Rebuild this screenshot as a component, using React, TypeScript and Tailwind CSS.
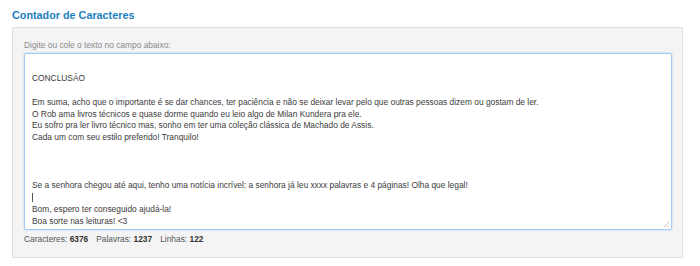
const lines: string[] = [
  "",
  "CONCLUSÃO",
  "",
  "Em suma, acho que o importante é se dar chances, ter paciência e não se deixar levar pelo que outras pessoas dizem ou gostam de ler.",
  "O Rob ama livros técnicos e quase dorme quando eu leio algo de Milan Kundera pra ele.",
  "Eu sofro pra ler livro técnico mas, sonho em ter uma coleção clássica de Machado de Assis.",
  "Cada um com seu estilo preferido! Tranquilo!",
  "",
  "",
  "",
  "Se a senhora chegou até aqui, tenho uma notícia incrível: a senhora já leu xxxx palavras e 4 páginas! Olha que legal!",
  "|",
  "Bom, espero ter conseguido ajudá-la!",
  "Boa sorte nas leituras! <3",
];

function ResizeGrip() {
  return (
    <svg
      width="7"
      height="7"
      viewBox="0 0 7 7"
      className="absolute bottom-[1px] right-[1px]"
    >
      <path d="M1 6 L6 1 M4 6 L6 4" stroke="#b5b5b5" strokeWidth="0.8" />
    </svg>
  );
}

export default function App() {
  return (
    <div
      className="h-[266px] w-[700px] bg-white px-3 pt-[8px]"
      style={{ fontFamily: '"Liberation Sans", Arial, sans-serif' }}
    >
      <h1 className="text-[10.8px] font-bold leading-[14px] text-[#1c7fbf]">
        Contador de Caracteres
      </h1>

      <div className="mt-[5px] h-[231px] w-[671px] border border-[#e1e1e1] bg-[#f4f4f4] px-[11px] pt-[12px]">
        <div className="text-[8.4px] leading-[11px] text-[#8a8a8a]">
          Digite ou cole o texto no campo abaixo:
        </div>

        <div className="relative mt-[2px] h-[177px] w-[648px] rounded-[2px] border border-[#a9cdf0] bg-white px-[7px] pt-[7px] shadow-[0_0_2px_rgba(102,164,230,0.6)]">
          {lines.map((line, i) =>
            line === "|" ? (
              <div key={i} className="flex h-[11.9px] items-center">
                <span className="h-[9px] w-px bg-[#555]" />
              </div>
            ) : (
              <div
                key={i}
                className="h-[11.9px] whitespace-pre text-[8.4px] leading-[11.9px] text-[#3c3c3c]"
              >
                {line || " "}
              </div>
            )
          )}
          <ResizeGrip />
        </div>

        <div className="mt-[4px] flex gap-[8px] text-[8.4px] leading-[11px] text-[#555]">
          <span>
            Caracteres: <b className="text-[#333]">6376</b>
          </span>
          <span>
            Palavras: <b className="text-[#333]">1237</b>
          </span>
          <span>
            Linhas: <b className="text-[#333]">122</b>
          </span>
        </div>
      </div>
    </div>
  );
}
